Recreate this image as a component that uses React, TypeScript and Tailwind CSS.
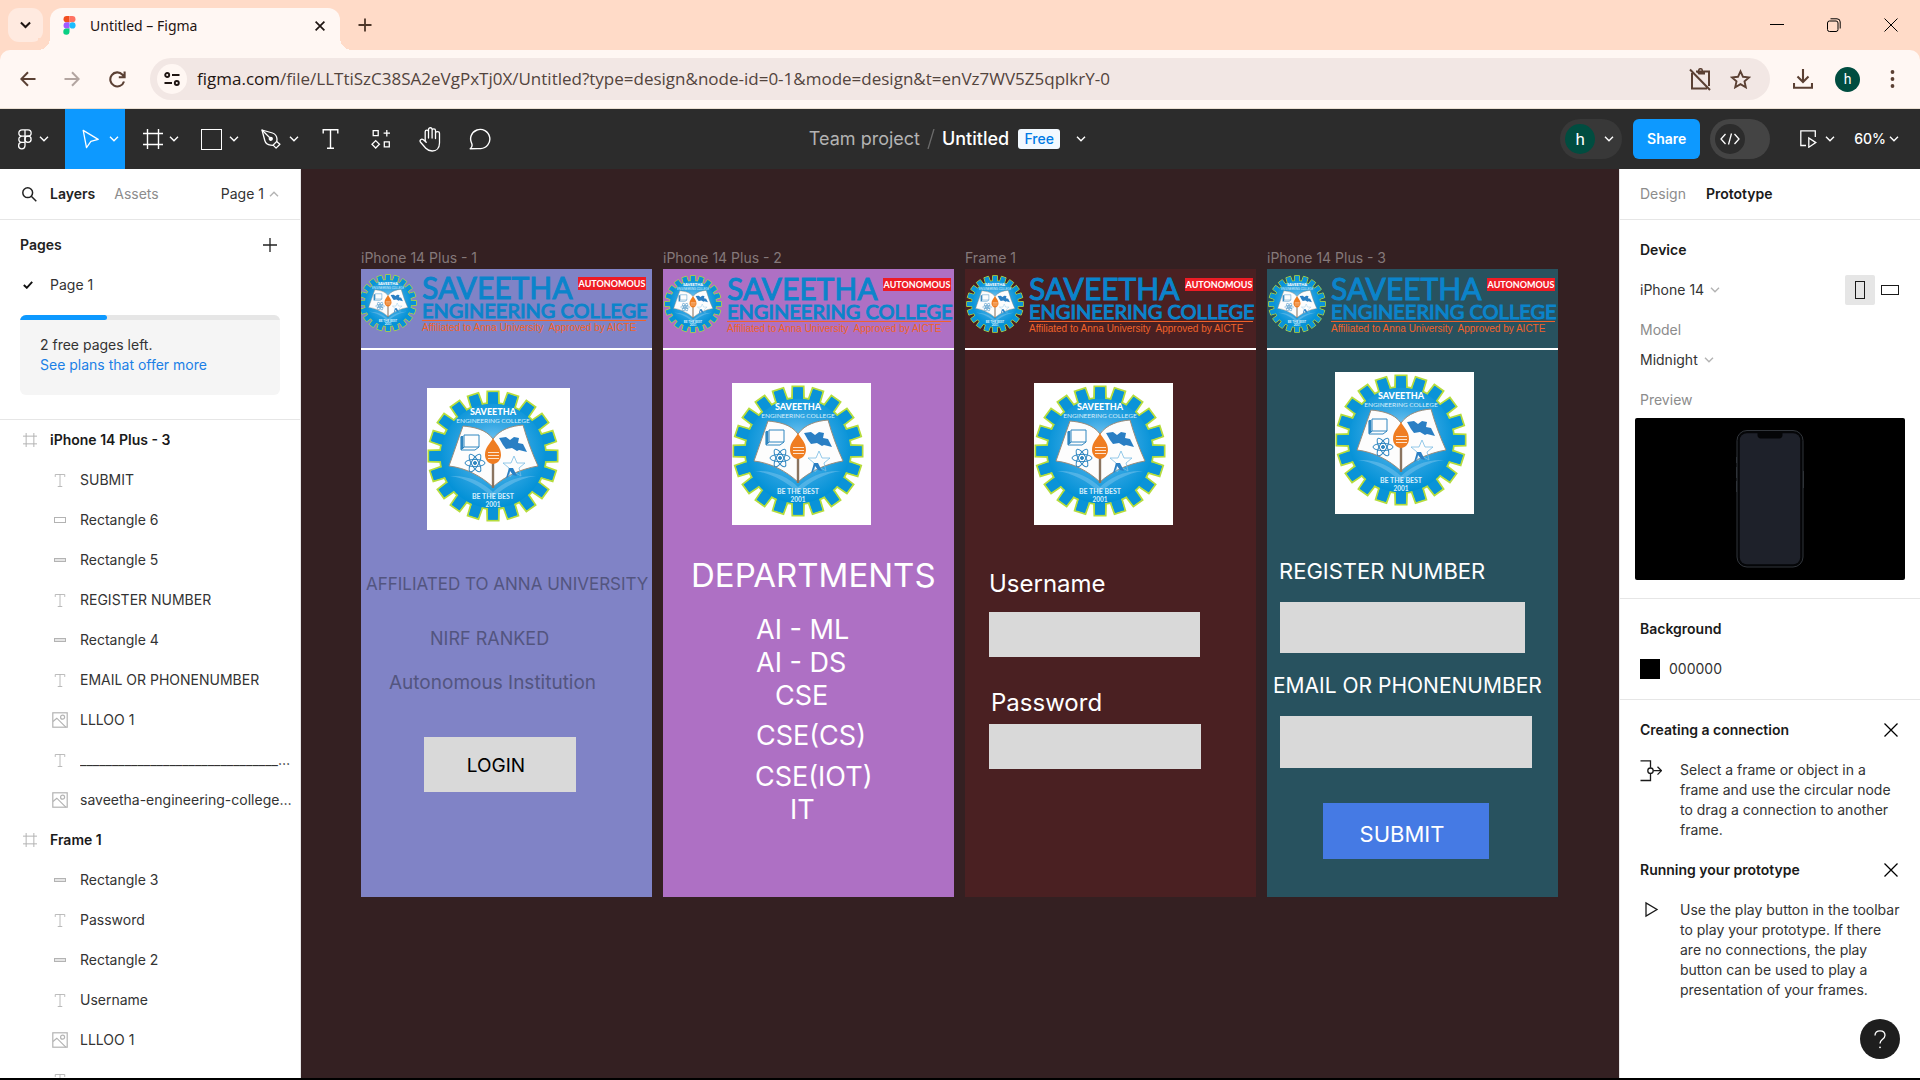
import React from "react";

type IconProps = { className?: string };

/* ---------- small icons ---------- */

const Chevron = ({ className = "" }: IconProps) => (
  <svg viewBox="0 0 10 6" className={`w-[10px] h-[6px] shrink-0 ${className}`} fill="none" stroke="currentColor" strokeWidth="1.4">
    <path d="M1 .8l4 4 4-4" />
  </svg>
);

const FigmaColor = () => (
  <svg viewBox="0 0 12 19" className="w-[13px] h-[19px] shrink-0">
    <path d="M3.2 0H6v6.3H3.2a3.15 3.15 0 010-6.3z" fill="#f24e1e" />
    <path d="M6 0h2.8a3.15 3.15 0 010 6.3H6z" fill="#ff7262" />
    <path d="M3.2 6.3H6v6.3H3.2a3.15 3.15 0 010-6.3z" fill="#a259ff" />
    <circle cx="9" cy="9.45" r="3.1" fill="#1abcfe" />
    <path d="M3.2 12.6H6v3.2a3.1 3.1 0 11-2.8-3.2z" fill="#0acf83" />
  </svg>
);

const FigmaOutline = () => (
  <svg viewBox="0 0 14 21" className="w-[14px] h-[21px]" fill="none" stroke="currentColor" strokeWidth="1.3">
    <path d="M7 .8H4a3.1 3.1 0 000 6.3h3zM7 .8h3a3.1 3.1 0 010 6.3H7zM7 7.1H4a3.1 3.1 0 000 6.3h3zM7 13.4H4a3.2 3.2 0 103 3.4z" />
    <circle cx="10" cy="10.3" r="3.1" />
  </svg>
);

const MoveIcon = () => (
  <svg viewBox="0 0 18 20" className="w-[18px] h-[20px]" fill="none" stroke="currentColor" strokeWidth="1.3" strokeLinejoin="round">
    <path d="M1.200 1.400l15 9-7.300 1.900-4.400 6.300z" />
  </svg>
);

const FrameIcon = ({ className = "" }: IconProps) => (
  <svg viewBox="0 0 20 20" className={className} fill="none" stroke="currentColor" strokeWidth="1.400">
    <path d="M4.500 0v20M15.500 0v20M0 4.500h20M0 15.500h20" />
  </svg>
);

const PenIcon = () => (
  <svg viewBox="0 0 20 20" className="w-[20px] h-[20px]" fill="none" stroke="currentColor" strokeWidth="1.3" strokeLinejoin="round">
    <path d="M1 1l10.500 3c2.500.8 4.300 3.300 4.500 6l-.2 2.400-3.800 3.900-2.400-.2C6.300 15.800 4.500 14 3.800 11.500z" />
    <path d="M1 1l7.800 7.800M15.600 12.400l3.300 2.800-3.800 3.900-3-3" />
    <circle cx="9.800" cy="9.800" r="1.500" fill="currentColor" />
  </svg>
);

const TypeIcon = ({ className = "" }: IconProps) => (
  <svg viewBox="0 0 16 20" className={className} fill="none" stroke="currentColor" strokeWidth="1.4">
    <path d="M.7 4.500V.7h14.600v3.800M8 .7v18.600M4.500 19.300h7" />
  </svg>
);

const ResourcesIcon = () => (
  <svg viewBox="0 0 20 20" className="w-[20px] h-[20px]" fill="none" stroke="currentColor" strokeWidth="1.3">
    <path d="M2.200 1.700h5v5h-5zM13.300 12.800h5v5h-5zM15.800 1v6.400M12.600 4.200H19M4.700 11.600l3.700 3.700L4.700 19 1 15.300z" />
  </svg>
);

const HandIcon = () => (
  <svg viewBox="0 0 22 25" className="w-[22px] h-[25px]" fill="none" stroke="currentColor" strokeWidth="1.300" strokeLinecap="round" strokeLinejoin="round">
    <path d="M6.200 13.500V4.800c0-2.300 3.300-2.300 3.300 0v6.200V2.600c0-2.500 3.600-2.500 3.600 0v8.400V3.600c0-2.300 3.400-2.300 3.400 0v8V6.500c0-2.400 4-2.400 4 0v9.500c0 5-3 8-7.300 8-3.200 0-4.700-.8-6.400-2.700l-5-5.800c-2-2.300.8-4.300 2.600-2.700l2.800 2.500z" />
  </svg>
);

const CommentIcon = () => (
  <svg viewBox="0 0 22 22" className="w-[22px] h-[22px]" fill="none" stroke="currentColor" strokeWidth="1.400" strokeLinejoin="round">
    <path d="M1.200 20.800c2-1.600 2.300-3 1.600-5.200A9.600 9.600 0 1111.700 20.600c-2.400 0-5 .2-10.500.2z" />
  </svg>
);

const ImageIcon = () => (
  <svg viewBox="0 0 16 16" className="w-[16px] h-[16px]" fill="none" stroke="currentColor" strokeWidth="1.200">
    <rect x=".8" y=".8" width="14.400" height="14.400" />
    <circle cx="10.600" cy="5.200" r="2" />
    <path d="M1 9.500l3.800-3.300 9 9" />
  </svg>
);

const CloseThin = () => (
  <svg viewBox="0 0 14 14" className="w-[14px] h-[14px]" fill="none" stroke="currentColor" strokeWidth="1.300">
    <path d="M.5.5l13 13M13.500.5l-13 13" />
  </svg>
);

/* ---------- college artwork ---------- */

const teeth = Array.from({ length: 20 }, (_, i) => i * 18);

const GearDefs = () => (
  <svg className="absolute w-0 h-0" aria-hidden="true">
    <defs>
      <radialGradient id="glow" cx="50%" cy="45%" r="55%">
        <stop offset="0" stopColor="#8fd0f5" />
        <stop offset=".45" stopColor="#3aa9e4" />
        <stop offset="1" stopColor="#0090d6" />
      </radialGradient>
      <g id="gear">
        <g fill="#0a93d8" stroke="#b5dc3c" strokeWidth="2">
          {teeth.map((a) => (
            <path key={a} d="M-6-50l.4-14.500h11.200l.4 14.500z" transform={`rotate(${a})`} />
          ))}
          <circle r="53" />
        </g>
        {teeth.map((a) => (
          <path key={a} d="M-5.200-48l.4-15.700h9.600l.4 15.700z" fill="#0a93d8" transform={`rotate(${a})`} />
        ))}
        <circle r="52.200" fill="url(#glow)" />
        <path d="M-30-30C-20-29-7-27 0-17 7-27 19-30 30-31 34-17 39-3 45 10 28 13 12 20 0 31-12 20-27 12-44 10-39-4-35-16-30-30z" fill="#fdfdfd" stroke="#9a8c7c" strokeWidth="1" />
        <path d="M-43 20C-25 19-10 26 0 36 10 26 26 19 43 20 28 22 12 30 0 42-12 30-28 22-43 20z" fill="#7cc6ee" opacity=".5" />
        <path d="M0 4v28" stroke="#8a7460" strokeWidth="2.400" />
        <path d="M0-18c3 6 8 9 8 17 0 5-4 9-8 9s-8-4-8-9C-8-9-3-12 0-18z" fill="#ef7d22" />
        <path d="M-5-3.500H6M-5-.5H6M-5 2.500H6" stroke="#fde3cc" strokeWidth="1" />
        <g fill="none" stroke="#2f86c0" strokeWidth="1">
          <path d="M-29-21h15v12h-15zM-32-19v13h14M-29-9l-3 3M-14-9l-4 3" />
          <path d="M-31-20v13" strokeWidth="2.500" />
          <ellipse cx="-18" cy="7" rx="10" ry="3.600" />
          <ellipse cx="-18" cy="7" rx="10" ry="3.600" transform="rotate(60 -18 7)" />
          <ellipse cx="-18" cy="7" rx="10" ry="3.600" transform="rotate(120 -18 7)" />
          <circle cx="-18" cy="7" r="1.500" fill="#2f86c0" />
          <path d="M10 7l8 0 3-7 3 7 8 0-6 5 2 8-7-4-4 5-1-9z" stroke="#79bbe3" strokeWidth=".8" />
        </g>
        <path d="M6-18l7-1 4 3 4-3 5 1-1 5 5 1 4 8-8-2-2 1-5-3-6 1-3-4z" fill="#2a7fc4" />
        <path d="M13 22l3-10 4 0 4 8-4-1-3-4-2 6z" fill="#2a7fc4" />
        <g fill="#fff" textAnchor="middle" fontFamily="Lato, sans-serif">
          <text y="-41" fontSize="9" fontWeight="900">SAVEETHA</text>
          <text y="-33" fontSize="6.500" fill="#d9effb">ENGINEERING COLLEGE</text>
          <text y="43" fontSize="7" fontWeight="700" fill="#d9effb">BE THE BEST</text>
          <text y="51" fontSize="6.500" fontWeight="700" fill="#d9effb">2001</text>
        </g>
      </g>
    </defs>
  </svg>
);

const BigLogo = ({ className = "" }: IconProps) => (
  <div className={`absolute h-[142px] bg-white overflow-hidden ${className}`}>
    <svg viewBox="0 0 143 142" className="w-[143px] h-[142px]">
      <use href="#gear" x="66" y="68" />
    </svg>
  </div>
);

const Header = ({ className = "" }: IconProps) => (
  <div className={`absolute w-[291px] h-[66px] flex ${className}`}>
    <svg viewBox="-66 -66 132 132" className="ml-px mt-[5px] w-[58px] h-[58px] shrink-0">
      <use href="#gear" />
    </svg>
    <div className="relative ml-[5px] w-[224px] pt-[5px] whitespace-nowrap font-[Lato,sans-serif] text-[#0b84cb]">
      <div className="text-[30px] leading-[26px] [-webkit-text-stroke:1px_#0b84cb]">SAVEETHA</div>
      <div className="text-[20px] leading-[20px] [-webkit-text-stroke:1px_#0b84cb]">ENGINEERING COLLEGE</div>
      <div className="h-px bg-[#f0622a]" />
      <div className="mt-px text-[10px] leading-[11px] text-[#f0622a] whitespace-pre font-['Liberation_Sans',sans-serif]">Affiliated to Anna University  Approved by AICTE</div>
      <div className="absolute right-0 top-[8px] h-[13px] w-[68px] bg-[#ee1c25] flex justify-center text-[9px] leading-[13px] font-bold text-white">AUTONOMOUS</div>
    </div>
  </div>
);

type FrameProps = { title: string; className: string; children: React.ReactNode };
const Artboard = ({ title, className, children }: FrameProps) => (
  <figure className="w-[291px] shrink-0">
    <figcaption className="h-[20px] text-[14px] leading-[18px] text-[#85797a]">{title}</figcaption>
    <div className={`relative h-[628px] overflow-hidden ${className}`}>
      {children}
      <div className="absolute inset-x-0 top-[79px] h-[2px] bg-white" />
    </div>
  </figure>
);

const Label = ({ className = "", children }: { className?: string; children: React.ReactNode }) => (
  <div className={`absolute whitespace-nowrap ${className}`}>{children}</div>
);

/* ---------- layers ---------- */

type Layer = { kind: "frame" | "text" | "box" | "thin" | "image"; name: string };
const layers: Layer[] = [
  { kind: "frame", name: "iPhone 14 Plus - 3" },
  { kind: "text", name: "SUBMIT" },
  { kind: "box", name: "Rectangle 6" },
  { kind: "thin", name: "Rectangle 5" },
  { kind: "text", name: "REGISTER NUMBER" },
  { kind: "thin", name: "Rectangle 4" },
  { kind: "text", name: "EMAIL OR PHONENUMBER" },
  { kind: "image", name: "LLLOO 1" },
  { kind: "text", name: "______________________________________" },
  { kind: "image", name: "saveetha-engineering-college-logo" },
  { kind: "frame", name: "Frame 1" },
  { kind: "thin", name: "Rectangle 3" },
  { kind: "text", name: "Password" },
  { kind: "thin", name: "Rectangle 2" },
  { kind: "text", name: "Username" },
  { kind: "image", name: "LLLOO 1" },
  { kind: "text", name: "" },
];

const LayerIcon = ({ kind }: { kind: Layer["kind"] }) => {
  if (kind === "frame") return <FrameIcon className="w-[14px] h-[14px]" />;
  if (kind === "text") return <TypeIcon className="w-[14px] h-[13px]" />;
  if (kind === "image") return <ImageIcon />;
  if (kind === "box") return <span className="w-[12px] h-[6px] border border-[#b3b3b3]" />;
  return <span className="w-[12px] h-[4px] border border-[#b3b3b3] bg-[#e5e5e5]" />;
};

const Tool = ({ label, className = "", children }: { label: string; className?: string; children: React.ReactNode }) => (
  <button aria-label={label} className={`h-full flex items-center justify-center ${className}`}>{children}</button>
);

export default function App() {
  return (
    <div className="h-screen flex flex-col overflow-hidden bg-black font-[Inter,sans-serif] text-[14px] leading-[20px] text-[#333]">
      <GearDefs />

      {/* tab strip */}
      <div className="h-[50px] shrink-0 bg-[#ffdbc8] flex pl-[8px] pt-[8px] text-[#1f1512]">
        <button aria-label="Search tabs" className="w-[35px] h-[34px] rounded-[11px] bg-[#ffeae0] flex items-center justify-center">
          <svg viewBox="0 0 12 8" className="w-[11px] h-[8px]" fill="none" stroke="currentColor" strokeWidth="2.200"><path d="M1 1.200l5 5 5-5" /></svg>
        </button>
        <div className="relative ml-[7px] w-[290px] h-[42px] bg-[#fff7f3] rounded-t-[12px] flex items-center pl-[13px] pr-[15px] pb-[7px]">
          <span className="absolute -left-[12px] bottom-0 w-[12px] h-[12px] bg-[radial-gradient(circle_at_0_0,#ffdbc8_12px,#fff7f3_12px)]" />
          <span className="absolute -right-[12px] bottom-0 w-[12px] h-[12px] bg-[radial-gradient(circle_at_100%_0,#ffdbc8_12px,#fff7f3_12px)]" />
          <FigmaColor />
          <span className="ml-[14px] flex-1 font-['Noto_Sans',sans-serif] text-[14px]">Untitled – Figma</span>
          <button aria-label="Close tab">
            <svg viewBox="0 0 10 10" className="w-[10px] h-[10px]" fill="none" stroke="currentColor" strokeWidth="1.700"><path d="M.6.6l8.800 8.800M9.400.6L.6 9.400" /></svg>
          </button>
        </div>
        <button aria-label="New tab" className="ml-[18px] h-[34px] text-[#4d3629]">
          <svg viewBox="0 0 14 14" className="w-[14px] h-[14px]" fill="none" stroke="currentColor" strokeWidth="1.800"><path d="M7 .5v13M.5 7h13" /></svg>
        </button>
        <div className="ml-auto h-[34px] flex items-center gap-[43px] pr-[22px] text-black">
          <button aria-label="Minimize"><svg viewBox="0 0 14 14" className="w-[14px] h-[14px]" stroke="currentColor"><path d="M0 6.500h14" /></svg></button>
          <button aria-label="Restore"><svg viewBox="0 0 14 14" className="w-[14px] h-[14px]" fill="none" stroke="currentColor"><rect x=".5" y="3" width="10.500" height="10.500" rx="2" /><path d="M3.500.8h6.500a3.200 3.200 0 013.200 3.200v6.500" /></svg></button>
          <button aria-label="Close"><svg viewBox="0 0 14 14" className="w-[14px] h-[14px]" stroke="currentColor"><path d="M.5.5l13 13M13.500.5l-13 13" /></svg></button>
        </div>
      </div>

      {/* address bar */}
      <div className="h-[59px] shrink-0 bg-[#ffdbc8]">
        <div className="h-full bg-[#fff7f3] border-b border-[#eadfd2] rounded-t-[10px] flex items-center pl-[20px] pr-[25px] text-[#5b4033]">
          <button aria-label="Back">
            <svg viewBox="0 0 16 16" className="w-[16px] h-[16px]" fill="none" stroke="currentColor" strokeWidth="2"><path d="M15.500 8H1.500M8 1.200L1.300 8 8 14.800" /></svg>
          </button>
          <button aria-label="Forward" className="ml-[28px] text-[#b3a5a0]">
            <svg viewBox="0 0 16 16" className="w-[16px] h-[16px]" fill="none" stroke="currentColor" strokeWidth="2"><path d="M.5 8h14M8 1.200L14.700 8 8 14.800" /></svg>
          </button>
          <button aria-label="Reload" className="ml-[29px]">
            <svg viewBox="0 0 17 17" className="w-[17px] h-[17px]" fill="none" stroke="currentColor" strokeWidth="2.100"><path d="M15 10.500A7 7 0 1113.500 3.700l1.800 2M15.600.5v5.700H9.800" /></svg>
          </button>
          <div className="ml-[24px] flex-1 h-[42px] rounded-full bg-[#f2e7e4] flex items-center pl-[7px] pr-[19px]">
            <span className="w-[30px] h-[30px] shrink-0 rounded-full bg-[#fff7f3] flex items-center justify-center text-[#1f1512]">
              <svg viewBox="0 0 16 14" className="w-[16px] h-[14px]" fill="none" stroke="currentColor" strokeWidth="1.900"><circle cx="3.200" cy="3" r="2" /><path d="M8 3h7.500M.5 11h7.500" /><circle cx="12.800" cy="11" r="2" /></svg>
            </span>
            <div className="ml-[10px] flex-1 font-['Open_Sans',sans-serif] text-[17px] leading-[24px] text-[#52443d] whitespace-nowrap">
              <span className="text-[#1f1512]">figma.com</span>/file/LLTtiSzC38SA2eVgPxTj0X/Untitled?type=design&amp;node-id=0-1&amp;mode=design&amp;t=enVz7WV5Z5qplkrY-0
            </div>
            <button aria-label="Clipboard blocked">
              <svg viewBox="0 0 22 23" className="w-[22px] h-[23px]" fill="none" stroke="currentColor" strokeWidth="2"><path d="M7 3.500H20V18M3 5v15.500h15M1 1.500l20 20.500" /><path d="M7 3h9v3.500H9.500z" fill="currentColor" stroke="none" /><circle cx="11.500" cy="2.500" r="1.800" strokeWidth="1.500" /></svg>
            </button>
            <button aria-label="Bookmark" className="ml-[19px]">
              <svg viewBox="0 0 21 20" className="w-[21px] h-[20px]" fill="none" stroke="currentColor" strokeWidth="1.900"><path d="M10.500 2.300l2.500 5.500 6 .6-4.500 4 1.300 5.900-5.300-3.100-5.300 3.100 1.300-5.900-4.500-4 6-.6z" /></svg>
            </button>
          </div>
          <button aria-label="Downloads" className="ml-[23px]">
            <svg viewBox="0 0 20 20" className="w-[20px] h-[20px]" fill="none" stroke="currentColor" strokeWidth="2.100"><path d="M10 0v12.500M4.500 7.500L10 13l5.500-5.500M1 14v4.800h18V14" /></svg>
          </button>
          <span className="ml-[22px] w-[25px] h-[25px] rounded-full bg-[#004d40] text-white text-[14px] flex items-center justify-center font-[Roboto,sans-serif]">h</span>
          <button aria-label="Menu" className="ml-[30px]">
            <svg viewBox="0 0 5 18" className="w-[5px] h-[18px]" fill="currentColor"><circle cx="2.500" cy="2" r="1.900" /><circle cx="2.500" cy="9" r="1.900" /><circle cx="2.500" cy="16" r="1.900" /></svg>
          </button>
        </div>
      </div>

      {/* editor toolbar */}
      <div className="h-[60px] shrink-0 bg-[#2c2c2c] text-white flex items-center">
        <div className="flex-1 flex h-full items-center">
          <Tool label="Main menu" className="w-[65px] gap-[7px] pl-[2px]"><FigmaOutline /><Chevron /></Tool>
          <Tool label="Move" className="w-[60px] gap-[9px] bg-[#0d99ff] pl-[10px]"><MoveIcon /><Chevron /></Tool>
          <Tool label="Frame" className="w-[60px] gap-[6px] pl-[12px]"><FrameIcon className="w-[20px] h-[20px]" /><Chevron /></Tool>
          <Tool label="Shape" className="w-[60px] gap-[7px] pl-[9px]"><span className="w-[21px] h-[21px] border border-white" /><Chevron /></Tool>
          <Tool label="Pen" className="w-[60px] gap-[8px] pl-[10px]"><PenIcon /><Chevron /></Tool>
          <Tool label="Text" className="w-[50px]"><TypeIcon className="w-[17px] h-[20px]" /></Tool>
          <Tool label="Resources" className="w-[50px] pl-[2px]"><ResourcesIcon /></Tool>
          <Tool label="Hand" className="w-[50px]"><HandIcon /></Tool>
          <Tool label="Comment" className="w-[50px]"><CommentIcon /></Tool>
        </div>
        <div className="flex items-center text-[18px] leading-[20px] whitespace-nowrap">
          <span className="text-[#b3b3b3]">Team project</span>
          <span className="mx-[7px]"><svg viewBox="0 0 8 20" className="w-[8px] h-[20px]" stroke="#6b6b6b" strokeWidth="1.300"><path d="M1 20L7 0" /></svg></span>
          <span className="font-medium">Untitled</span>
          <span className="ml-[9px] h-[20px] w-[42px] rounded-[3px] bg-[#f2f9ff] text-[#007be5] text-[14px] font-medium flex items-center justify-center">Free</span>
          <button aria-label="File options" className="ml-[16px] mr-[4px]"><Chevron /></button>
        </div>
        <div className="flex-1 flex items-center justify-end pr-[21px]">
          <button aria-label="Account" className="w-[62px] h-[40px] rounded-full bg-[#383838] flex items-center pl-[5px] gap-[9px]">
            <span className="w-[30px] h-[30px] rounded-full bg-[#004d40] flex items-center justify-center text-[17px] font-[Roboto,sans-serif]">h</span>
            <Chevron />
          </button>
          <button className="ml-[11px] w-[67px] h-[40px] rounded-[6px] bg-[#0d99ff] text-[14px] font-semibold">Share</button>
          <button role="switch" aria-checked="false" aria-label="Dev mode" className="ml-[10px] w-[60px] h-[40px] rounded-full bg-[#444] flex items-center pl-[5px]">
            <span className="w-[30px] h-[30px] rounded-full bg-[#2c2c2c] flex items-center justify-center">
              <svg viewBox="0 0 20 12" className="w-[20px] h-[12px]" fill="none" stroke="currentColor" strokeWidth="1.300"><path d="M5.500 1L1 6l4.500 5M14.500 1L19 6l-4.500 5M11.500.5l-3 11" /></svg>
            </span>
          </button>
          <button aria-label="Present" className="ml-[30px] flex items-center gap-[8px]">
            <svg viewBox="0 0 17 18" className="w-[17px] h-[18px]" fill="none" stroke="currentColor" strokeWidth="1.300"><path d="M6 15.500H.8V.8h14.500V7M8.800 8v9.200l7-4.600z" /></svg>
            <Chevron />
          </button>
          <button className="ml-[19px] flex items-center gap-[3px] text-[14px] font-medium">60%<Chevron /></button>
        </div>
      </div>

      {/* workspace */}
      <div className="flex-1 min-h-0 flex mb-[2px]">
        <aside className="w-[301px] shrink-0 bg-white border-r border-[#e6e6e6] overflow-hidden">
          <div className="h-[51px] border-b border-[#e6e6e6] flex items-center pl-[22px] pr-[21px]">
            <svg viewBox="0 0 15 15" className="w-[15px] h-[15px]" fill="none" stroke="#222" strokeWidth="1.500"><circle cx="5.700" cy="5.700" r="4.900" /><path d="M9.300 9.300l5 5" /></svg>
            <button className="ml-[13px] font-semibold text-[#222]">Layers</button>
            <button className="ml-[19px] text-[#8c8c8c]">Assets</button>
            <button className="ml-auto flex items-center gap-[5px]">Page 1<Chevron className="rotate-180 text-[#b3b3b3]" /></button>
          </div>
          <div className="h-[200px] border-b border-[#e6e6e6] px-[20px] pt-[5px]">
            <div className="h-[40px] flex items-center justify-between pr-[3px]">
              <h2 className="font-semibold text-[#222]">Pages</h2>
              <button aria-label="Add page"><svg viewBox="0 0 14 14" className="w-[14px] h-[14px]" stroke="#222" strokeWidth="1.300"><path d="M7 0v14M0 7h14" /></svg></button>
            </div>
            <div className="h-[40px] flex items-center pl-[3px]">
              <svg viewBox="0 0 10 8" className="w-[10px] h-[8px]" fill="none" stroke="#111" strokeWidth="1.900"><path d="M.8 4l3 2.800L9.200.8" /></svg>
              <span className="ml-[17px]">Page 1</span>
            </div>
            <div className="mt-[10px] h-[80px] rounded-[6px] bg-[#f5f5f5] overflow-hidden">
              <div className="h-[5px] bg-[#e6e6e6]"><div className="w-1/3 h-full bg-[#0d99ff] rounded-r-[3px]" /></div>
              <div className="px-[20px] pt-[15px]">
                <p>2 free pages left.</p>
                <a href="#plans" className="block text-[#1b7fe6]">See plans that offer more</a>
              </div>
            </div>
          </div>
          <ul>
            {layers.map((l, i) => (
              <li key={i} className={l.kind === "frame" ? "h-[40px] flex items-center pl-[20px] pr-[12px] font-semibold text-[#1a1a1a]" : "h-[40px] flex items-center pl-[50px] pr-[6px]"}>
                <span className="w-[20px] shrink-0 flex justify-center text-[#b3b3b3]"><LayerIcon kind={l.kind} /></span>
                <span className="ml-[10px] min-w-0 truncate">{l.name}</span>
              </li>
            ))}
          </ul>
        </aside>

        <main className="flex-1 min-w-0 bg-[#342022] overflow-hidden pt-[80px] pl-[60px]">
          <div className="flex gap-[11px]">
            <Artboard title="iPhone 14 Plus - 1" className="bg-[#8083c6]">
              <Header className="-left-[3px] top-0" />
              <BigLogo className="left-[66px] top-[119px] w-[143px]" />
              <Label className="left-[5px] top-[303px] text-[17px] leading-[24px] text-[#53557f]">AFFILIATED TO ANNA UNIVERSITY</Label>
              <Label className="left-[69px] top-[358px] text-[18px] leading-[24px] text-[#53557f]">NIRF RANKED</Label>
              <Label className="left-[28px] top-[402px] text-[19px] leading-[24px] text-[#53557f]">Autonomous Institution</Label>
              <button className="absolute left-[63px] top-[468px] w-[152px] h-[55px] pt-[2px] pr-[8px] bg-[#d9d9d9] text-[19px] text-black">LOGIN</button>
            </Artboard>
            <Artboard title="iPhone 14 Plus - 2" className="bg-[#ae70c4] text-white">
              <Header className="left-0 top-[1px]" />
              <BigLogo className="left-[69px] top-[114px] w-[139px]" />
              <Label className="left-[28px] top-[286px] text-[33px] leading-[40px]">DEPARTMENTS</Label>
              <Label className="left-[93px] top-[344px] text-[27px] leading-[33px]">AI - ML<br />AI - DS</Label>
              <Label className="left-[112px] top-[410px] text-[27px] leading-[33px]">CSE</Label>
              <Label className="left-[93px] top-[450px] text-[27px] leading-[33px]">CSE(CS)</Label>
              <Label className="left-[92px] top-[491px] text-[27px] leading-[33px]">CSE(IOT)</Label>
              <Label className="left-[127px] top-[524px] text-[27px] leading-[33px]">IT</Label>
            </Artboard>
            <Artboard title="Frame 1" className="bg-[#4a2022] text-white">
              <Header className="left-0 top-[1px]" />
              <BigLogo className="left-[69px] top-[114px] w-[139px]" />
              <label htmlFor="username" className="absolute left-[24px] top-[300px] text-[24px] leading-[30px]">Username</label>
              <input id="username" className="absolute left-[24px] top-[343px] w-[211px] h-[45px] bg-[#d9d9d9] text-black" />
              <label htmlFor="password" className="absolute left-[26px] top-[419px] text-[24px] leading-[30px]">Password</label>
              <input id="password" type="password" className="absolute left-[24px] top-[455px] w-[212px] h-[45px] bg-[#d9d9d9] text-black" />
            </Artboard>
            <Artboard title="iPhone 14 Plus - 3" className="bg-[#28525f] text-white">
              <Header className="left-0 top-[1px]" />
              <BigLogo className="left-[68px] top-[103px] w-[139px]" />
              <label htmlFor="register" className="absolute left-[12px] top-[287px] text-[22px] leading-[30px] whitespace-nowrap">REGISTER NUMBER</label>
              <input id="register" className="absolute left-[13px] top-[333px] w-[245px] h-[51px] bg-[#d9d9d9] text-black" />
              <label htmlFor="email" className="absolute left-[6px] top-[402px] text-[21px] leading-[30px] whitespace-nowrap">EMAIL OR PHONENUMBER</label>
              <input id="email" className="absolute left-[13px] top-[447px] w-[252px] h-[52px] bg-[#d9d9d9] text-black" />
              <button className="absolute left-[56px] top-[534px] w-[166px] h-[56px] pt-[6px] pr-[8px] bg-[#457ae4] text-[22px]">SUBMIT</button>
            </Artboard>
          </div>
        </main>

        <aside className="relative w-[301px] shrink-0 bg-white border-l border-[#e6e6e6]">
          <div className="h-[51px] border-b border-[#e6e6e6] flex items-center gap-[20px] pl-[20px]">
            <button className="text-[#8c8c8c]">Design</button>
            <button className="font-semibold text-[#1a1a1a]">Prototype</button>
          </div>
          <section className="h-[379px] border-b border-[#e6e6e6] px-[20px] pt-[10px]">
            <h2 className="h-[40px] flex items-center font-semibold text-[#1a1a1a]">Device</h2>
            <div className="h-[40px] flex items-center">
              <button className="flex items-center gap-[6px]">iPhone 14<Chevron className="text-[#b3b3b3]" /></button>
              <button aria-label="Portrait" className="ml-auto w-[30px] h-[30px] rounded-[2px] bg-[#e6e6e6] flex items-center justify-center"><span className="w-[10px] h-[18px] border border-[#1a1a1a]" /></button>
              <button aria-label="Landscape" className="w-[30px] h-[30px] -mr-[5px] flex items-center justify-center"><span className="w-[18px] h-[10px] border border-[#1a1a1a]" /></button>
            </div>
            <p className="h-[40px] flex items-center text-[#8c8c8c]">Model</p>
            <button className="h-[20px] flex items-center gap-[6px]">Midnight<Chevron className="text-[#b3b3b3]" /></button>
            <p className="mt-[10px] h-[38px] pt-[2px] flex items-center text-[#8c8c8c]">Preview</p>
            <div className="-mx-[5px] h-[162px] rounded-[2px] bg-black flex items-center justify-center">
              <svg viewBox="0 0 68 140" className="w-[68px] h-[140px]">
                <rect x="1" y="1.500" width="66" height="136.500" rx="10" fill="#050608" stroke="#31353b" strokeWidth="1" />
                <rect x="3.800" y="4.300" width="60.400" height="131" rx="7" fill="#1e212a" />
                <path d="M21.500 3h25v3c0 2-1.300 3.500-3.200 3.500H24.700c-1.900 0-3.200-1.500-3.200-3.500z" fill="#050608" />
                <path d="M.4 28v6M.4 38v11M.4 52v11M67.600 42v17" stroke="#31353b" />
              </svg>
            </div>
          </section>
          <section className="h-[101px] border-b border-[#e6e6e6] px-[20px] pt-[10px]">
            <h2 className="h-[40px] flex items-center font-semibold text-[#1a1a1a]">Background</h2>
            <div className="h-[40px] flex items-center"><span className="w-[20px] h-[20px] bg-black" /><span className="ml-[9px]">000000</span></div>
          </section>
          <section className="pl-[20px] pr-[22px] pt-[10px]">
            <div className="h-[40px] flex items-center justify-between">
              <h2 className="font-semibold text-[#1a1a1a]">Creating a connection</h2>
              <button aria-label="Dismiss connection tip" className="text-black"><CloseThin /></button>
            </div>
            <div className="flex pt-[10px]">
              <svg viewBox="0 0 22 22" className="w-[22px] h-[22px] mr-[18px] shrink-0" fill="none" stroke="#1a1a1a" strokeWidth="1.300"><path d="M.5.800h10v7M10.500 13.500v7H.5M13.300 10.700h8M17.500 6.800l4 3.900-4 3.900" /><circle cx="10.500" cy="10.700" r="2.700" /></svg>
              <p className="whitespace-nowrap">Select a frame or object in a<br />frame and use the circular node<br />to drag a connection to another<br />frame.</p>
            </div>
            <div className="mt-[10px] h-[40px] flex items-center justify-between">
              <h2 className="font-semibold text-[#1a1a1a]">Running your prototype</h2>
              <button aria-label="Dismiss prototype tip" className="text-black"><CloseThin /></button>
            </div>
            <div className="flex pt-[10px]">
              <svg viewBox="0 0 22 22" className="w-[22px] h-[22px] mr-[18px] shrink-0" fill="none" stroke="#1a1a1a" strokeWidth="1.300"><path d="M6 3v13l11-6.500z" /></svg>
              <p className="whitespace-nowrap">Use the play button in the toolbar<br />to play your prototype. If there<br />are no connections, the play<br />button can be used to play a<br />presentation of your frames.</p>
            </div>
          </section>
          <button aria-label="Help" className="absolute right-[20px] bottom-[19px] w-[40px] h-[40px] rounded-full bg-[#1e1e1e] text-white flex items-center justify-center">
            <svg viewBox="0 0 12 19" className="w-[12px] h-[19px]" fill="none" stroke="currentColor" strokeWidth="1.300"><path d="M1 5.500C1 2.500 3 .8 6 .8s5 1.700 5 4.500c0 2-1 3-2.700 4.300C6.600 10.900 6 11.700 6 13.500" /><circle cx="6" cy="17.300" r=".9" fill="currentColor" stroke="none" /></svg>
          </button>
        </aside>
      </div>
    </div>
  );
}
